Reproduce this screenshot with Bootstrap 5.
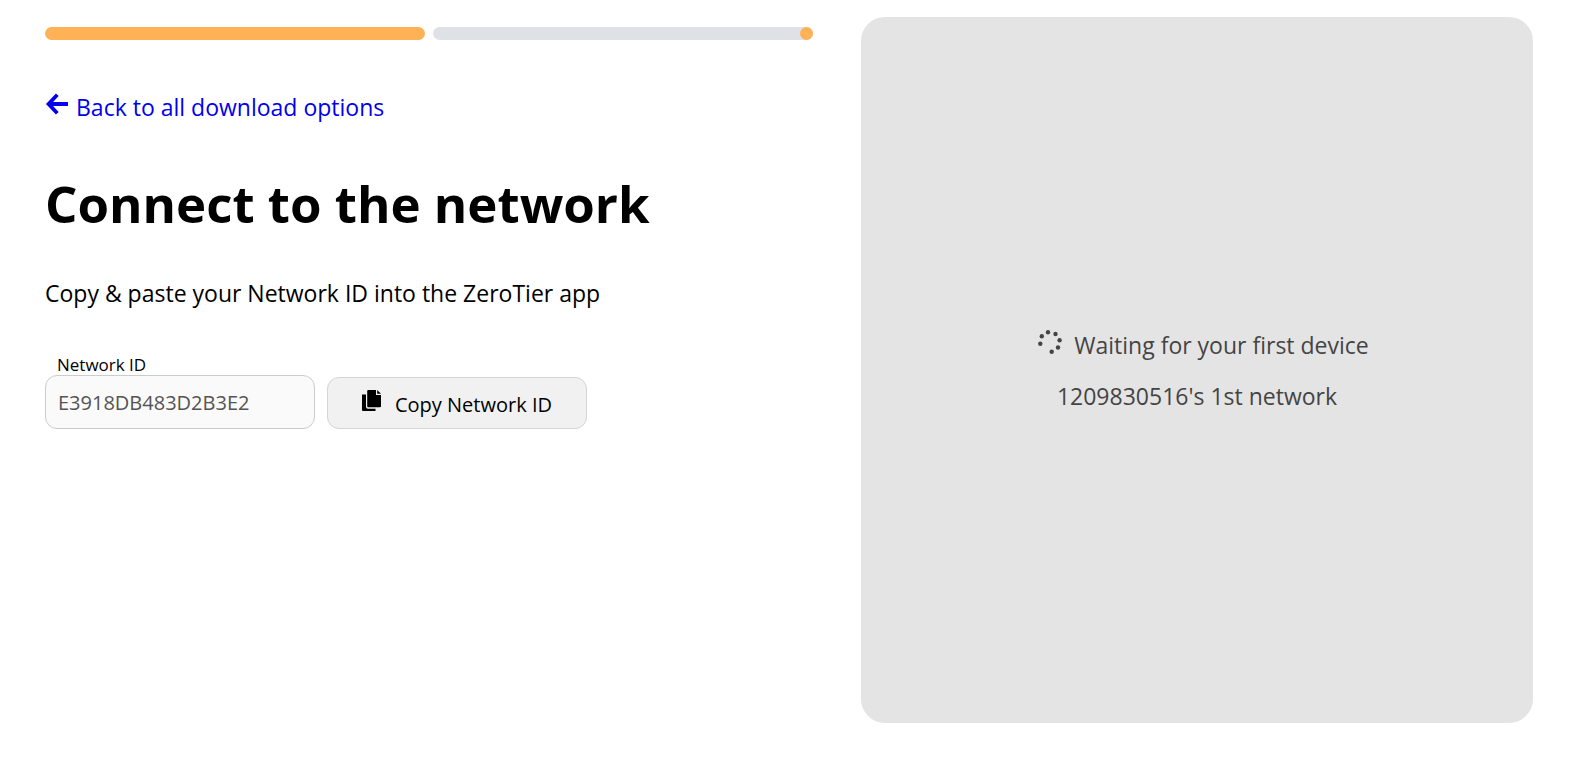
<!DOCTYPE html>
<html lang="en">
<head>
<meta charset="utf-8">
<meta name="viewport" content="width=device-width, initial-scale=1">
<title>Connect to the network</title>
<link href="https://cdn.jsdelivr.net/npm/bootstrap@5.3.0/dist/css/bootstrap.min.css" rel="stylesheet">
<style>
  body { font-family: "Segoe UI", "Open Sans", "Noto Sans", sans-serif; font-size: 23px; line-height: 36px; color: #000; background: #fff; }
  .setup { display: grid; grid-template-columns: 8fr 7fr; gap: 48px; padding: 17px 57px 0 45px; }
  .steps { padding-top: 10px; gap: 8px; }
  .step { flex: 1 1 0; height: 13px; background: #dee2e6; }
  .step-done { background: #ffb255; }
  .step-dot { width: 13px; height: 13px; background: #ffb255; }
  .back-link { color: #00e; margin-top: 49px; gap: 7px; }
  .back-link svg { margin-top: 3px; }
  .title { font-size: 51px; line-height: 72px; font-weight: 700; margin: 42px 0 0; }
  .hint { margin: 36px 0 0; }
  .id-form { margin-top: 44px; gap: 12px; }
  .id-field { width: 270px; }
  .id-field label { font-size: 17px; line-height: 20px; padding-left: 12px; }
  .id-field input { height: 54px; font-size: 20px; padding: 0 12px; color: #545454; background: #fafafa; border-color: #ccc; border-radius: 12px; }
  .copy-btn { width: 260px; height: 52px; font-size: 20px; gap: 13px; padding: 4px 0 0; background: #f1f1f1; border-color: #d4d4d4; border-radius: 12px; color: #000; }
  .copy-btn:hover { background: #e6e6e6; border-color: #ccc; color: #000; }
  .waiting { min-height: calc(100vh - 68px); background: #e4e4e4; border-radius: 24px; color: #444; gap: 15px; }
  .waiting p { margin: 0; }
  .waiting-status { gap: 11px; padding-left: 12px; }
  .waiting-status svg { margin-top: 2px; }
  @media (max-width: 991px) { .setup { grid-template-columns: 1fr; padding: 17px 24px; } }
</style>
</head>
<body>
<main class="setup">
  <section>
    <div class="steps d-flex">
      <div class="step step-done rounded-pill"></div>
      <div class="step rounded-pill d-flex justify-content-end"><span class="step-dot rounded-circle"></span></div>
    </div>
    <a href="#" class="back-link d-flex align-items-start text-decoration-none">
      <svg width="24" height="24" viewBox="0 0 24 24" fill="none" stroke="currentColor" stroke-width="3.8" aria-hidden="true"><path d="M12.3 2.8 3.6 12l8.7 9.2M3.4 12H23"/></svg>
      <span>Back to all download options</span>
    </a>
    <h1 class="title">Connect to the network</h1>
    <p class="hint">Copy &amp; paste your Network ID into the ZeroTier app</p>
    <form class="id-form d-flex flex-wrap align-items-end">
      <div class="id-field">
        <label for="network-id" class="d-block">Network ID</label>
        <input id="network-id" type="text" class="form-control" value="E3918DB483D2B3E2" readonly>
      </div>
      <button type="button" class="copy-btn btn d-flex align-items-center justify-content-center">
        <svg class="mb-2" width="20" height="22" viewBox="0 0 20 22" fill="currentColor" aria-hidden="true"><path d="M0 4.5h4v12.2a2 2 0 0 0 2 2h7.5V21H1a1 1 0 0 1-1-1z"/><path d="M6.2 0H14v5h5v11.2a1 1 0 0 1-1 1H6.2a1 1 0 0 1-1-1V1a1 1 0 0 1 1-1z"/><path d="M15.2 0 19 3.8h-3.8z"/></svg>
        <span>Copy Network ID</span>
      </button>
    </form>
  </section>
  <aside class="waiting d-flex flex-column align-items-center justify-content-center">
    <div class="waiting-status d-flex align-items-start" role="status">
      <svg width="26" height="26" viewBox="0 0 26 26" fill="currentColor" aria-hidden="true"><circle cx="11" cy="3.3" r="2.2"/><circle cx="18.5" cy="5" r="2.2"/><circle cx="22.6" cy="11.2" r="2.2"/><circle cx="21" cy="18.5" r="2.2"/><circle cx="14.7" cy="22.7" r="2.2"/><circle cx="3.3" cy="14.8" r="2.2"/><circle cx="4.8" cy="7.3" r="2.2"/></svg>
      <span>Waiting for your first device</span>
    </div>
    <p>1209830516's 1st network</p>
  </aside>
</main>
<script src="https://cdn.jsdelivr.net/npm/bootstrap@5.3.0/dist/js/bootstrap.bundle.min.js"></script>
</body>
</html>
